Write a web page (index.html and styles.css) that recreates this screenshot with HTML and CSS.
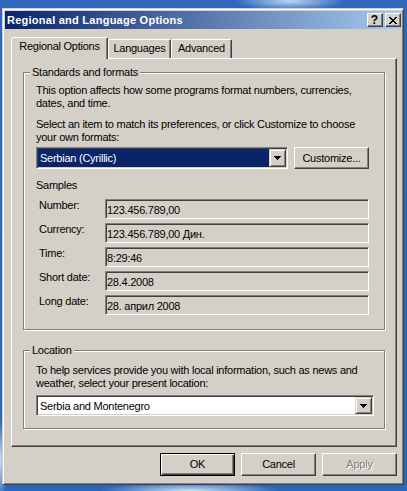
FILE: index.html
```html
<!DOCTYPE html>
<html>
<head>
<meta charset="utf-8">
<title>Regional and Language Options</title>
<link rel="stylesheet" href="styles.css">
</head>
<body>
<div class="window">
  <div class="titlebar">
    <span class="title">Regional and Language Options</span>
    <div class="title-buttons">
      <span class="tbtn tbtn-help">?</span>
      <span class="tbtn tbtn-close">
        <svg width="8" height="7" viewBox="0 0 8 7" shape-rendering="crispEdges">
          <path d="M0 0h2v1h-2zM6 0h2v1h-2zM1 1h2v1h-2zM5 1h2v1h-2zM2 2h4v1h-4zM3 3h2v1h-2zM2 4h4v1h-4zM1 5h2v1h-2zM5 5h2v1h-2zM0 6h2v1h-2zM6 6h2v1h-2z" fill="#000"/>
        </svg>
      </span>
    </div>
  </div>
  <div class="content">
    <div class="tabs">
      <div class="tab tab-regional active">Regional Options</div>
      <div class="tab tab-languages">Languages</div>
      <div class="tab tab-advanced">Advanced</div>
    </div>
    <div class="panel">
      <fieldset class="group group-formats">
        <legend>Standards and formats</legend>
        <div class="group-body body-formats">
          <p class="text">This option affects how some programs format numbers, currencies,<br>dates, and time.</p>
          <p class="text text-select">Select an item to match its preferences, or click Customize to choose<br>your own formats:</p>
          <div class="combo-row">
            <div class="combo combo-formats">
              <span class="combo-value selected">Serbian (Cyrillic)</span>
              <span class="combo-btn">
                <svg width="7" height="4" viewBox="0 0 7 4" shape-rendering="crispEdges"><path d="M0 0h7v1h-7zM1 1h5v1h-5zM2 2h3v1h-3zM3 3h1v1h-1z" fill="#000"/></svg>
              </span>
            </div>
            <div class="btn btn-customize">Customize...</div>
          </div>
          <div class="samples-title">Samples</div>
          <div class="samples">
            <div class="sample-row"><span class="sample-label">Number:</span><span class="sample-box">123.456.789,00</span></div>
            <div class="sample-row"><span class="sample-label">Currency:</span><span class="sample-box">123.456.789,00 Дин.</span></div>
            <div class="sample-row"><span class="sample-label">Time:</span><span class="sample-box">8:29:46</span></div>
            <div class="sample-row"><span class="sample-label">Short date:</span><span class="sample-box">28.4.2008</span></div>
            <div class="sample-row"><span class="sample-label">Long date:</span><span class="sample-box">28. април 2008</span></div>
          </div>
        </div>
      </fieldset>
      <fieldset class="group group-location">
        <legend>Location</legend>
        <div class="group-body body-location">
          <p class="text">To help services provide you with local information, such as news and<br>weather, select your present location:</p>
          <div class="combo combo-location">
            <span class="combo-value">Serbia and Montenegro</span>
            <span class="combo-btn">
              <svg width="7" height="4" viewBox="0 0 7 4" shape-rendering="crispEdges"><path d="M0 0h7v1h-7zM1 1h5v1h-5zM2 2h3v1h-3zM3 3h1v1h-1z" fill="#000"/></svg>
            </span>
          </div>
        </div>
      </fieldset>
    </div>
    <div class="actions">
      <div class="btn btn-default">OK</div>
      <div class="btn">Cancel</div>
      <div class="btn btn-disabled">Apply</div>
    </div>
  </div>
</div>
</body>
</html>
```

FILE: styles.css
```css
* { box-sizing: border-box; }
html, body { margin: 0; }
body {
  width: 407px;
  height: 491px;
  overflow: hidden;
  padding: 8px 0 0 2px;
  font-family: "Liberation Sans", Arial, sans-serif;
  font-size: 11px;
  letter-spacing: -0.25px;
  color: #000;
  background:
    radial-gradient(ellipse 55px 10px at 290px 1px, rgba(215,232,250,0.85), rgba(215,232,250,0) 100%),
    radial-gradient(ellipse 90px 9px at 190px 491px, rgba(225,238,250,0.9), rgba(225,238,250,0) 100%),
    radial-gradient(ellipse 8px 40px at 0px 460px, rgba(225,238,250,0.9), rgba(225,238,250,0) 100%),
    linear-gradient(#3068bc, #2c66b8);
}

.window {
  width: 402px;
  height: 477px;
  background: #d4d0c8;
  border: 1px solid;
  border-color: #d4d0c8 #404040 #404040 #d4d0c8;
  box-shadow: inset 1px 1px #fff, inset -1px -1px #808080;
  padding: 2px;
}

.titlebar {
  height: 18px;
  display: flex;
  align-items: center;
  justify-content: space-between;
  padding-left: 2px;
  background: linear-gradient(90deg, #0a246a, #a6caf0);
  color: #fff;
  font-weight: bold;
  letter-spacing: 0.25px;
  line-height: 18px;
}
.title-buttons { display: flex; gap: 2px; }
.tbtn {
  width: 16px;
  height: 14px;
  display: flex;
  align-items: center;
  justify-content: center;
  background: #d4d0c8;
  border: 1px solid;
  border-color: #fff #404040 #404040 #fff;
  box-shadow: inset -1px -1px #808080;
  color: #000;
}
.tbtn-help {
  font-size: 12px;
  line-height: 12px;
  letter-spacing: 0;
  padding-right: 1px;
}
.tbtn-close svg { display: block; }

.content { padding: 0 4px 0 6px; }

.tabs {
  display: flex;
  align-items: flex-end;
  height: 21px;
  margin-top: 8px;
}
.tab {
  height: 19px;
  padding-top: 2px;
  border-style: solid;
  border-width: 1px 1px 0 1px;
  border-color: #fff #404040 transparent #fff;
  border-radius: 2px 2px 0 0;
  box-shadow: inset -1px 0 #808080;
  background: #d4d0c8;
  text-align: center;
  line-height: 13px;
  white-space: nowrap;
}
.tab-regional { width: 97px; }
.tab-languages { width: 63px; }
.tab-advanced { width: 61px; }
.tab.active {
  height: 22px;
  margin-bottom: -1px;
  position: relative;
  z-index: 1;
}

.panel {
  width: 386px;
  height: 389px;
  border: 1px solid;
  border-color: #fff #404040 #404040 #fff;
  box-shadow: inset -1px -1px #808080;
  padding: 7px 11px 0 11px;
}

.group {
  margin: 0;
  padding: 0 0 0 6px;
  min-width: 0;
  border: 1px solid #808080;
  box-shadow: inset 1px 1px #fff, 1px 1px #fff;
}
.group legend {
  padding: 0 2px;
  margin: 0;
  line-height: 13px;
  background: #d4d0c8;
}
.group-location { margin-top: 14px; }

.group-body { padding-left: 6px; }
.body-formats { padding-top: 5px; padding-bottom: 14px; }
.body-location { padding-top: 7px; padding-bottom: 12px; }

.text {
  margin: 0;
  line-height: 13px;
  white-space: nowrap;
}
.text-select { margin-top: 8px; }

.combo-row {
  display: flex;
  gap: 6px;
  margin-top: 3px;
}
.combo {
  display: flex;
  height: 22px;
  padding: 1px;
  background: #fff;
  border: 1px solid;
  border-color: #808080 #fff #fff #808080;
  box-shadow: inset 1px 1px #404040, inset -1px -1px #d4d0c8;
}
.combo-formats { width: 252px; }
.combo-location { width: 338px; height: 21px; margin-top: 5px; }
.combo-value {
  flex: 1;
  padding-left: 2px;
  display: flex;
  align-items: center;
  white-space: nowrap;
}
.combo-value.selected {
  background: #0a246a;
  color: #fff;
}
.combo-btn {
  width: 17px;
  display: flex;
  align-items: center;
  justify-content: center;
  background: #d4d0c8;
  border: 1px solid;
  border-color: #d4d0c8 #404040 #404040 #d4d0c8;
  box-shadow: inset 1px 1px #fff, inset -1px -1px #808080;
}
.combo-btn svg { display: block; }

.btn {
  width: 75px;
  height: 23px;
  display: flex;
  align-items: center;
  justify-content: center;
  background: #d4d0c8;
  border: 1px solid;
  border-color: #fff #404040 #404040 #fff;
  box-shadow: inset -1px -1px #808080;
  line-height: 13px;
  white-space: nowrap;
}
.btn-customize { height: 22px; }
.btn-default {
  border-color: #000;
  box-shadow: inset 1px 1px #fff, inset -1px -1px #404040, inset -2px -2px #808080;
}
.btn-disabled {
  color: #808080;
  text-shadow: 1px 1px #fff;
}

.samples-title {
  margin-top: 10px;
  line-height: 13px;
}
.samples {
  margin-top: 7px;
  display: flex;
  flex-direction: column;
  gap: 4px;
}
.sample-row {
  display: flex;
  height: 20px;
}
.sample-label {
  width: 69px;
  padding-left: 3px;
  line-height: 13px;
  white-space: nowrap;
}
.sample-box {
  width: 264px;
  height: 20px;
  padding: 4px 0 0 1px;
  line-height: 13px;
  white-space: nowrap;
  border: 1px solid;
  border-color: #808080 #fff #fff #808080;
  box-shadow: inset 1px 1px #404040, inset -1px -1px #d4d0c8;
}

.actions {
  display: flex;
  justify-content: flex-end;
  gap: 6px;
  margin-top: 6px;
}
```
